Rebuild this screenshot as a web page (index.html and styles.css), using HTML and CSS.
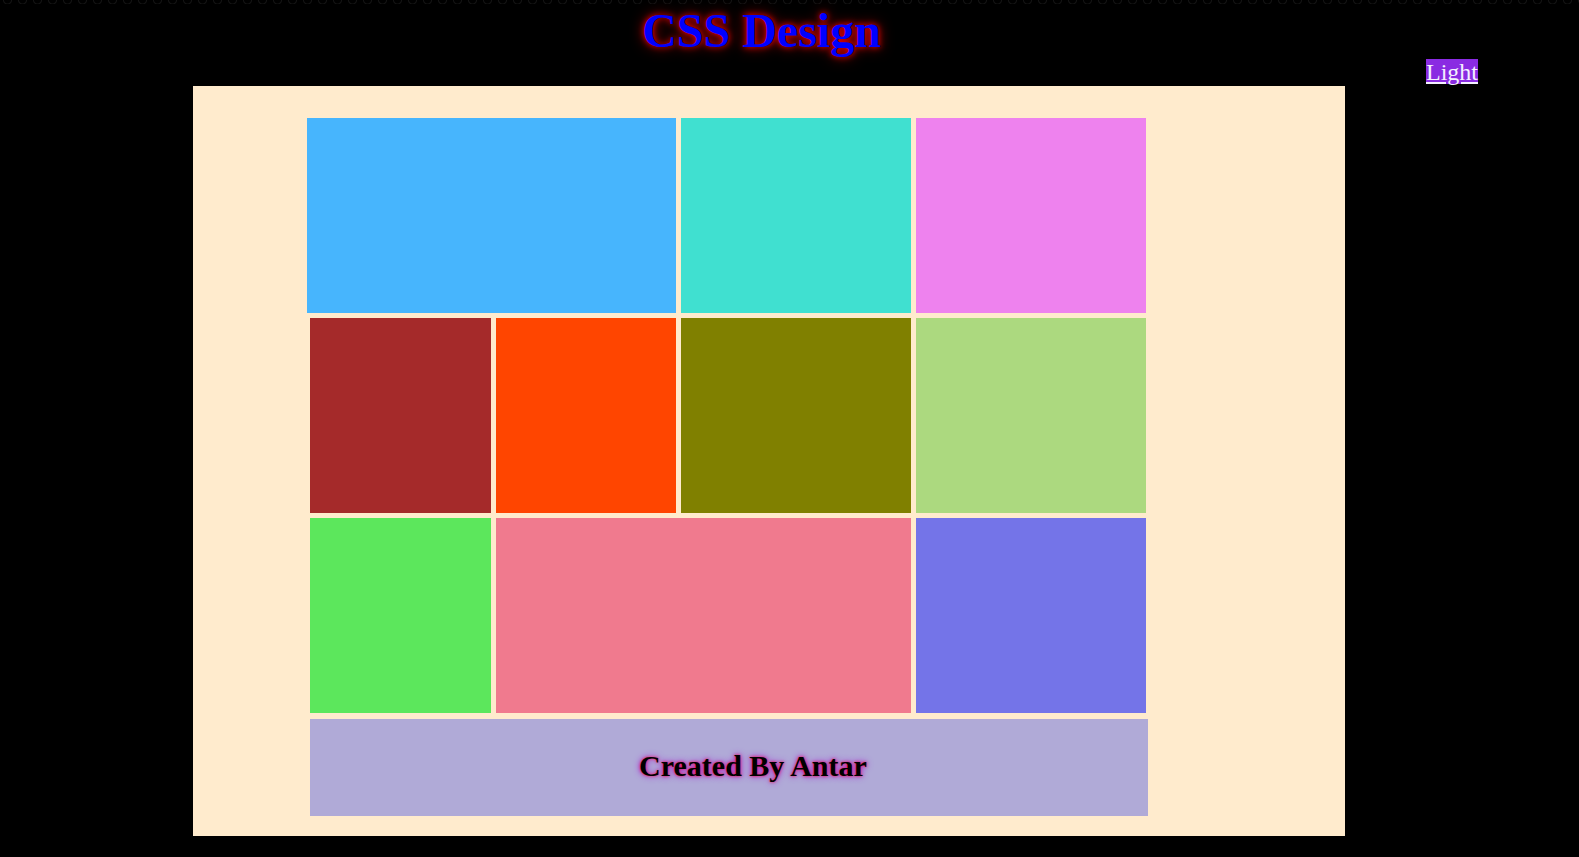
FILE: index.html
```html
<!DOCTYPE html>
<html lang="en">
<head>
<meta charset="utf-8">
<title>CSS Design</title>
<link rel="stylesheet" href="styles.css">
</head>
<body>
  <header class="top">
    <h1 class="title">CSS Design</h1>
    <div class="toggle-row"><a class="toggle" href="#">Light</a></div>
  </header>
  <main class="board">
    <div class="grid">
      <div class="cell c-blue"></div>
      <div class="cell c-turq"></div>
      <div class="cell c-violet"></div>
      <div class="cell c-brown"></div>
      <div class="cell c-orange"></div>
      <div class="cell c-olive"></div>
      <div class="cell c-lime"></div>
      <div class="cell c-green"></div>
      <div class="cell c-pink"></div>
      <div class="cell c-slate"></div>
      <footer class="cell c-foot"><h2 class="credit">Created By Antar</h2></footer>
    </div>
  </main>
</body>
</html>
```

FILE: styles.css
```css
html {
  background: #000;
}
body {
  margin: 0;
  min-height: 857px;
  background-color: #000;
  background-image: radial-gradient(circle at 50% 0%, transparent 3px, #141414 4px, transparent 5px);
  background-size: 15px 4px;
  background-repeat: repeat-x;
  font-family: "Liberation Serif", "Times New Roman", serif;
}
.top {
  display: flex;
  flex-direction: column;
}
.title {
  margin: 0;
  height: 59px;
  box-sizing: border-box;
  padding-top: 3px;
  padding-right: 56px;
  font-size: 48px;
  line-height: 56px;
  font-weight: bold;
  text-align: center;
  color: #0000ff;
  text-shadow: 0 0 6px #ff0000, 0 0 14px #b00000;
}
.toggle-row {
  display: flex;
  justify-content: flex-end;
  padding-right: 101px;
}
.toggle {
  display: inline-block;
  background: #8a2be2;
  color: #f4f0ff;
  font-size: 24px;
  line-height: 27px;
  height: 25px;
  text-decoration: underline;
}
.board {
  margin: 2px 0 0 193px;
  width: 1152px;
  height: 750px;
  box-sizing: border-box;
  padding: 32px 0 0 117px;
  background: #ffebcd;
}
.grid {
  display: grid;
  grid-template-columns: 181px 180px 230px 230px;
  grid-template-rows: 195px 195px 195px 98px;
  column-gap: 5px;
  row-gap: 5px;
}
.c-blue {
  grid-column: 1 / 3;
  margin-left: -3px;
  background: #47b5fd;
}
.c-turq { background: #40e0d0; }
.c-violet { background: #ee82ee; }
.c-brown { background: #a52a2a; }
.c-orange { background: #ff4500; }
.c-olive { background: #808000; }
.c-lime { background: #acd97f; }
.c-green { background: #5ce75c; }
.c-pink {
  grid-column: 2 / 4;
  background: #f07a8e;
}
.c-slate { background: #7474e8; }
.c-foot {
  grid-column: 1 / 5;
  margin-right: -2px;
  margin-top: 1px;
  background: #b0aad7;
  display: flex;
  align-items: center;
  justify-content: center;
  padding-left: 48px;
  padding-bottom: 4px;
}
.credit {
  margin: 0;
  font-size: 30px;
  font-weight: bold;
  color: #000;
  text-shadow: 0 0 3px #ff0040, 0 0 7px #a000d0;
}
```
